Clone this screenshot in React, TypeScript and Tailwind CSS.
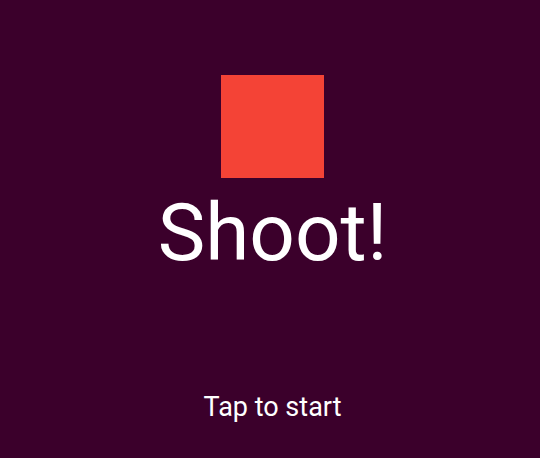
export default function App() {
  return (
    <div className="w-[540px] h-[458px] bg-[#3b002b] flex flex-col items-center pl-[5px] font-['Roboto',sans-serif] text-white">
      <div className="mt-[75px] w-[103px] h-[103px] bg-[#f44336]" />
      <h1 className="mt-[15px] text-[80px] leading-none">Shoot!</h1>
      <p className="mt-[121px] text-[27px] leading-none">Tap to start</p>
    </div>
  )
}
